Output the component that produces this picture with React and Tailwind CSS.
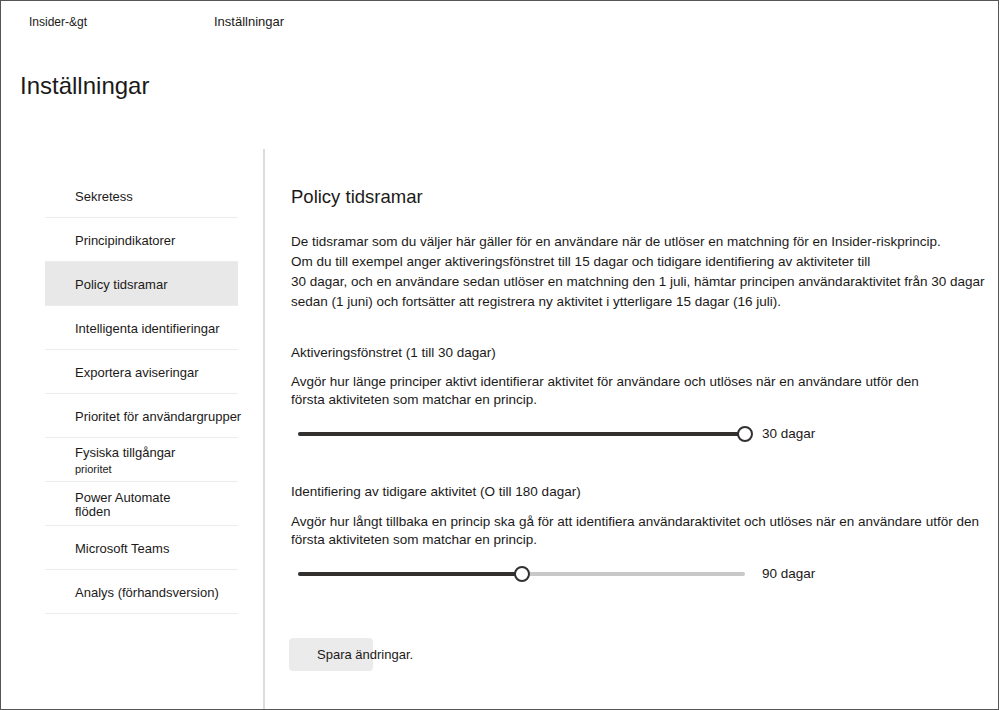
import React from "react";

const navItems = [
  { label: "Sekretess" },
  { label: "Principindikatorer" },
  { label: "Policy tidsramar", active: true },
  { label: "Intelligenta identifieringar" },
  { label: "Exportera aviseringar" },
  { label: "Prioritet för användargrupper" },
  { label: "Fysiska tillgångar", sub: "prioritet" },
  { label: "Power Automate", second: "flöden" },
  { label: "Microsoft Teams" },
  { label: "Analys (förhandsversion)" },
];

// Simple read-only slider look
const Slider = ({ percent, value }) => (
  <div className="flex items-center h-5 mt-[15px]">
    <div className="relative ml-[7px] w-[447px] h-[4px] rounded-full bg-[#c8c8c8]">
      <div
        className="absolute left-0 top-0 h-full rounded-full bg-[#323130]"
        style={{ width: `${percent}%` }}
      />
      <div
        className="absolute top-1/2 w-[16px] h-[16px] -translate-x-1/2 -translate-y-1/2 rounded-full bg-white border-2 border-[#323130]"
        style={{ left: `${percent}%` }}
      />
    </div>
    <span className="ml-[17px] text-[13.5px]">{value}</span>
  </div>
);

const App = () => {
  return (
    <div
      className="w-[999px] h-[710px] border border-[#555] bg-white text-[#1b1a19] flex flex-col overflow-hidden"
      style={{ fontFamily: '"Liberation Sans", Arial, sans-serif' }}
    >
      {/* Breadcrumb */}
      <div className="flex items-center h-4 mt-[13px] text-[12px]">
        <span className="ml-[28px] w-[185px]">Insider-&amp;gt</span>
        <span className="text-[13px]">Inställningar</span>
      </div>

      {/* Title */}
      <h1 className="ml-[19px] mt-[40px] text-[24px] leading-8">Inställningar</h1>

      <div className="flex flex-1 mt-[47px]">
        {/* Left nav */}
        <nav className="w-[264px] shrink-0 pl-[44px] pt-[25px] border-r-2 border-[#dcdcdc]">
          <ul className="w-[193px]">
            {navItems.map((item) => (
              <li
                key={item.label}
                className={`h-[44px] flex flex-col justify-center pl-[30px] pt-[2px] border-b border-[#ececec] text-[13px] whitespace-nowrap ${
                  item.active ? "bg-[#e8e8e8]" : ""
                }`}
              >
                {item.sub ? (
                  <>
                    <span className="leading-4">{item.label}</span>
                    <span className="text-[11px] leading-4">{item.sub}</span>
                  </>
                ) : item.second ? (
                  <>
                    <span className="leading-[14px]">{item.label}</span>
                    <span className="leading-[14px]">{item.second}</span>
                  </>
                ) : (
                  <span>{item.label}</span>
                )}
              </li>
            ))}
          </ul>
        </nav>

        {/* Content */}
        <main className="flex-1 pl-[26px] pt-[36px] text-[13.5px]">
          <h2 className="text-[18.5px] leading-6">Policy tidsramar</h2>

          <p className="mt-[23px] leading-5 whitespace-nowrap">
            De tidsramar som du väljer här gäller för en användare när de utlöser en matchning för en Insider-riskprincip.
            <br />
            Om du till exempel anger aktiveringsfönstret till 15 dagar och tidigare identifiering av aktiviteter till
            <br />
            30 dagar, och en användare sedan utlöser en matchning den 1 juli, hämtar principen användaraktivitet från 30 dagar
            <br />
            sedan (1 juni) och fortsätter att registrera ny aktivitet i ytterligare 15 dagar (16 juli).
          </p>

          <div className="mt-[31px] leading-5">Aktiveringsfönstret (1 till 30 dagar)</div>
          <p className="mt-[10px] leading-[18px] whitespace-nowrap">
            Avgör hur länge principer aktivt identifierar aktivitet för användare och utlöses när en användare utför den
            <br />
            första aktiviteten som matchar en princip.
          </p>
          <Slider percent={100} value="30 dagar" />

          <div className="mt-[38px] leading-5">Identifiering av tidigare aktivitet (O till 180 dagar)</div>
          <p className="mt-[11px] leading-[18px] whitespace-nowrap">
            Avgör hur långt tillbaka en princip ska gå för att identifiera användaraktivitet och utlöses när en användare utför den
            <br />
            första aktiviteten som matchar en princip.
          </p>
          <Slider percent={50} value="90 dagar" />

          <button className="mt-[54px] -ml-[2px] w-[84px] h-[33px] rounded-sm bg-[#ebebeb] pl-[28px] text-left text-[13px] whitespace-nowrap overflow-visible">
            Spara ändringar.
          </button>
        </main>
      </div>
    </div>
  );
};

export default App;
